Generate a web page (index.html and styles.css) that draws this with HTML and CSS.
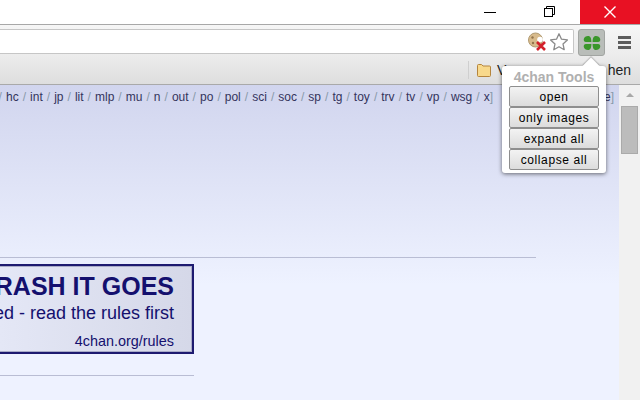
FILE: index.html
```html
<!DOCTYPE html>
<html lang="en">
<head>
    <meta charset="UTF-8">
    <title>4chan Tools</title>
    <link rel="stylesheet" href="styles.css">
</head>
<body>
    <div class="titlebar">
        <button class="win-btn">
            <svg width="14" height="14" viewBox="0 0 14 14"><path d="M1 7.500h12" stroke="#000" stroke-width="1"/></svg>
        </button>
        <button class="win-btn">
            <svg width="14" height="14" viewBox="0 0 14 14" fill="none" stroke="#000"><path d="M3.500 3.500v-2h8v8h-2"/><rect x="1.500" y="3.500" width="8" height="8" fill="#fff"/></svg>
        </button>
        <button class="win-btn win-close">
            <svg width="14" height="14" viewBox="0 0 14 14"><path d="M1.500 1.500l11 11M12.500 1.500l-11 11" stroke="#fff" stroke-width="1.400"/></svg>
        </button>
    </div>

    <div class="toolbar">
        <div class="omnibox">
            <svg width="19" height="19" viewBox="0 0 19 19">
                <circle cx="7.500" cy="8" r="7" fill="#d8bb8c" stroke="#b09a72" stroke-width="1"/>
                <circle cx="12" cy="7.500" r="2.800" fill="#fff"/>
                <circle cx="4.500" cy="5.500" r="1.200" fill="#93744c"/>
                <circle cx="5" cy="11" r="1.200" fill="#93744c"/>
                <path d="M9 10l8 8M17 10l-8 8" stroke="#d3202a" stroke-width="2.600"/>
            </svg>
            <svg width="20" height="20" viewBox="0 0 20 20"><path d="M10 1.800l2.500 5.400 5.900.7-4.400 4 1.200 5.800-5.200-2.900-5.200 2.900 1.200-5.800-4.400-4 5.900-.7z" fill="#fff" stroke="#8a8a8a" stroke-width="1.300" stroke-linejoin="round"/></svg>
        </div>
        <div class="ext-btn">
            <svg width="18" height="16" viewBox="0 0 18 16">
                <g fill="#3a962b">
                    <path d="M8.400 7H3C1 7 .5 5.500 .8 4 1.200 2 3 1 5 1 7 1 8.400 2.500 8.400 7z"/>
                    <path d="M9.600 7H15c2 0 2.500-1.500 2.200-3C16.800 2 15 1 13 1 11 1 9.600 2.500 9.600 7z"/>
                    <path d="M8.400 9H3c-2 0-2.500 1.500-2.200 3 .4 2 2.200 3 4.200 3 2 0 3.400-1.500 3.400-6z"/>
                    <path d="M9.600 9H15c2 0 2.500 1.500 2.200 3-.4 2-2.200 3-4.200 3-2 0-3.400-1.500-3.400-6z"/>
                </g>
            </svg>
        </div>
        <div class="menu-btn"><span></span><span></span><span></span></div>
    </div>

    <div class="bookmarks">
        <span class="bm-sep"></span>
        <svg class="folder" width="16" height="14" viewBox="0 0 16 14"><path d="M1.500 12.500v-10q0-1 1-1h3l1.500 1.500h6.500q1 0 1 1v8.500q0 1-1 1h-11q-1 0-1-1z" fill="#f8d98c" stroke="#b5853d"/></svg>
        <span class="bm-label">V</span>
        <span class="bm-label bm-rest">hen</span>
    </div>

    <div class="viewport">
        <div class="page">
            <div class="boardlist">
                <span>/ <a>hc</a> / <a>int</a> / <a>jp</a> / <a>lit</a> / <a>mlp</a> / <a>mu</a> / <a>n</a> / <a>out</a> / <a>po</a> / <a>pol</a> / <a>sci</a> / <a>soc</a> / <a>sp</a> / <a>tg</a> / <a>toy</a> / <a>trv</a> / <a>tv</a> / <a>vp</a> / <a>wsg</a> / <a>x</a>]</span>
                <span><a>e</a>]</span>
            </div>
            <hr class="rule-wide">
            <div class="banner">
                <div class="banner-title">IF IT'S TRASH IT GOES</div>
                <div class="banner-sub">This board is moderated - read the rules first</div>
                <div class="banner-link">4chan.org/rules</div>
            </div>
            <hr class="rule-short">
        </div>
        <div class="scrollbar">
            <div class="scroll-up"></div>
            <div class="scroll-thumb"></div>
        </div>
    </div>

    <div class="popup">
        <div class="popup-arrow"></div>
        <div class="popup-title">4chan Tools</div>
        <button class="popup-btn">open</button>
        <button class="popup-btn">only images</button>
        <button class="popup-btn">expand all</button>
        <button class="popup-btn">collapse all</button>
    </div>
</body>
</html>
```

FILE: styles.css
```css
html, body {
    margin: 0;
    height: 400px;
    overflow: hidden;
}
body {
    display: flex;
    flex-direction: column;
    width: 640px;
    font-family: "Liberation Sans", Arial, sans-serif;
    background: #fff;
}
.titlebar {
    height: 24px;
    display: flex;
    justify-content: flex-end;
    background: #fff;
}
.win-btn {
    width: 60px;
    padding: 0;
    border: none;
    background: none;
    display: flex;
    align-items: center;
    justify-content: center;
}
.win-close {
    background: #e81123;
}
.toolbar {
    height: 32px;
    box-sizing: border-box;
    border-top: 1px solid #a8a8a8;
    padding-top: 4px;
    background: linear-gradient(#f6f6f6, #ececec);
    display: flex;
    align-items: flex-start;
}
.omnibox {
    width: 574px;
    height: 25px;
    box-sizing: border-box;
    background: #fff;
    border: 1px solid #c6c6c6;
    border-left: none;
    border-radius: 0 2px 2px 0;
    display: flex;
    align-items: center;
    justify-content: flex-end;
    gap: 2px;
    padding-right: 4px;
}
.ext-btn {
    width: 27px;
    height: 27px;
    margin-left: 4px;
    box-sizing: border-box;
    background: #b9bdb9;
    border: 1px solid #a2a5a2;
    border-radius: 3px;
    display: flex;
    align-items: center;
    justify-content: center;
}
.menu-btn {
    width: 13px;
    margin: 7px 0 0 13px;
    display: flex;
    flex-direction: column;
    gap: 2px;
}
.menu-btn span {
    height: 3px;
    background: #5c5c5c;
}
.bookmarks {
    height: 29px;
    box-sizing: border-box;
    background: linear-gradient(#ececec, #dedede);
    border-bottom: 1px solid #a9a9a9;
    display: flex;
    align-items: center;
    padding-left: 468px;
    font-size: 14px;
    color: #222;
}
.bm-sep {
    width: 1px;
    height: 18px;
    background: #cfcfcf;
    margin-right: 7px;
}
.folder {
    margin-right: 5px;
}
.bm-rest {
    margin-left: auto;
    margin-right: 9px;
}
.viewport {
    flex: 1;
    display: flex;
    min-height: 0;
}
.page {
    width: 619px;
    box-sizing: border-box;
    overflow: hidden;
    background: linear-gradient(#d1d5ee 0, #eef2ff 200px);
}
.boardlist {
    display: flex;
    justify-content: flex-end;
    gap: 111px;
    white-space: nowrap;
    padding: 5px 5px 0 0;
    height: 20px;
    box-sizing: border-box;
    font-size: 12px;
    word-spacing: 0.7px;
    color: #89a;
    line-height: 14px;
}
.boardlist a {
    color: #34345c;
}
.rule-wide, .rule-short {
    border: none;
    height: 1px;
    margin: 0;
    background: #b9bdd4;
}
.rule-wide {
    width: 536px;
    margin-top: 152px;
}
.banner {
    width: 194px;
    height: 90px;
    margin-top: 6px;
    box-sizing: border-box;
    border: 2px solid #1d1a70;
    border-left: none;
    box-shadow: inset -1px 1px 0 #a9abc8, inset 0 -1px 0 #a9abc8;
    background: linear-gradient(90deg, #e4e7f6, #d5d8e8);
    color: #14106e;
    display: flex;
    flex-direction: column;
    align-items: flex-end;
    padding-right: 18px;
    white-space: nowrap;
}
.banner-title {
    font-size: 25px;
    font-weight: bold;
    line-height: 28px;
    margin-top: 6px;
}
.banner-sub {
    font-size: 18px;
    line-height: 22px;
    margin-top: 2px;
}
.banner-link {
    font-size: 14.400px;
    line-height: 16px;
    margin-top: 9px;
}
.rule-short {
    width: 194px;
    margin-top: 21px;
}
.scrollbar {
    width: 21px;
    background: #f1f1f1;
    display: flex;
    flex-direction: column;
    align-items: center;
}
.scroll-up {
    width: 0;
    height: 0;
    margin-top: 8px;
    border-left: 4px solid transparent;
    border-right: 4px solid transparent;
    border-bottom: 4px solid #a8a8a8;
}
.scroll-thumb {
    width: 17px;
    height: 48px;
    margin-top: 9px;
    background: #bcbcbc;
    border: 1px solid #aaa;
    box-sizing: border-box;
}
.popup {
    position: absolute;
    left: 502px;
    top: 66px;
    width: 104px;
    height: 107px;
    box-sizing: border-box;
    background: #fff;
    border-radius: 3px;
    box-shadow: 0 1px 4px rgba(0, 0, 0, 0.55);
    display: flex;
    flex-direction: column;
    align-items: center;
    padding-top: 3px;
}
.popup-arrow {
    position: absolute;
    top: -6px;
    left: 83px;
    width: 12px;
    height: 12px;
    background: #fff;
    transform: rotate(45deg);
    box-shadow: -1px -1px 1px rgba(0, 0, 0, 0.2);
}
.popup-title {
    position: relative;
    font-size: 14px;
    font-weight: bold;
    line-height: 17px;
    color: #b0b0b0;
}
.popup-btn {
    width: 90px;
    height: 21px;
    padding: 0;
    box-sizing: border-box;
    font-family: "Liberation Sans", Arial, sans-serif;
    font-size: 12px;
    letter-spacing: 0.6px;
    color: #000;
    background: linear-gradient(#f3f3f3, #dcdcdc);
    border: 1px solid #8e8e8e;
    border-radius: 2px;
}
```
